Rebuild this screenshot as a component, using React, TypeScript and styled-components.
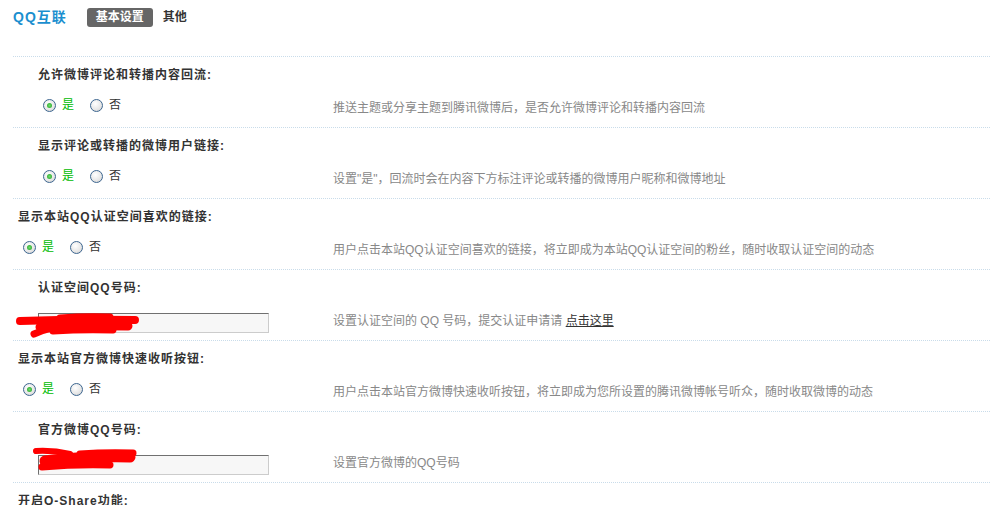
import React from 'react';
import styled, { createGlobalStyle } from 'styled-components';

const GlobalStyle = createGlobalStyle`
  html, body {
    margin: 0;
    padding: 0;
    background: #fff;
  }
  body {
    font-family: "Liberation Sans", "Noto Sans CJK SC", sans-serif;
    font-size: 12px;
    color: #333;
  }
`;

interface Setting {
  title: string;
  indent: boolean;
  kind: 'radio' | 'input';
  desc: string;
  link?: string;
  scribble?: 'a' | 'b';
}

const settings: Setting[] = [
  {
    title: '允许微博评论和转播内容回流:',
    indent: true,
    kind: 'radio',
    desc: '推送主题或分享主题到腾讯微博后，是否允许微博评论和转播内容回流',
  },
  {
    title: '显示评论或转播的微博用户链接:',
    indent: true,
    kind: 'radio',
    desc: '设置"是"，回流时会在内容下方标注评论或转播的微博用户昵称和微博地址',
  },
  {
    title: '显示本站QQ认证空间喜欢的链接:',
    indent: false,
    kind: 'radio',
    desc: '用户点击本站QQ认证空间喜欢的链接，将立即成为本站QQ认证空间的粉丝，随时收取认证空间的动态',
  },
  {
    title: '认证空间QQ号码:',
    indent: true,
    kind: 'input',
    scribble: 'a',
    desc: '设置认证空间的 QQ 号码，提交认证申请请 ',
    link: '点击这里',
  },
  {
    title: '显示本站官方微博快速收听按钮:',
    indent: false,
    kind: 'radio',
    desc: '用户点击本站官方微博快速收听按钮，将立即成为您所设置的腾讯微博帐号听众，随时收取微博的动态',
  },
  {
    title: '官方微博QQ号码:',
    indent: true,
    kind: 'input',
    scribble: 'b',
    desc: '设置官方微博的QQ号码',
  },
];

// red marker strokes over the redacted numbers: [x1, y1, x2, y2, width]
const marks: Record<'a' | 'b', { top: number; strokes: number[][] }> = {
  a: {
    top: 0,
    strokes: [
      [7, 8, 122, 7, 8],
      [27, 14, 115, 13, 9],
      [21, 21, 60, 13, 7],
      [47, 5, 97, 4, 7],
      [40, 18, 100, 17, 7],
    ],
  },
  b: {
    top: -10,
    strokes: [
      [23, 6, 57, 9, 6],
      [32, 16, 117, 12, 11],
      [29, 22, 97, 20, 7],
      [67, 9, 120, 8, 7],
    ],
  },
};

function Scribble({ variant }: { variant: 'a' | 'b' }) {
  const m = marks[variant];
  return (
    <Mark width="140" height="34" viewBox="0 0 140 34" style={{ top: m.top }}>
      {m.strokes.map(([x1, y1, x2, y2, w], i) => (
        <path
          key={i}
          d={`M${x1} ${y1} Q${(x1 + x2) / 2} ${Math.min(y1, y2) - 1} ${x2} ${y2}`}
          stroke="#ff0000"
          strokeWidth={w}
          strokeLinecap="round"
          fill="none"
        />
      ))}
    </Mark>
  );
}

export default function App() {
  return (
    <Page>
      <GlobalStyle />
      <Header>
        <Brand>QQ互联</Brand>
        <Tabs>
          <Tab $active>基本设置</Tab>
          <Tab>其他</Tab>
        </Tabs>
      </Header>

      {settings.map((s, i) => (
        <Row key={i}>
          <Title $indent={s.indent}>{s.title}</Title>
          {s.kind === 'radio' ? (
            <Controls $indent={s.indent}>
              <Option>
                <Radio $checked />
                <Yes>是</Yes>
              </Option>
              <Option>
                <Radio />
                <No>否</No>
              </Option>
            </Controls>
          ) : (
            <InputCell>
              <TextInput defaultValue="" />
              {s.scribble && <Scribble variant={s.scribble} />}
            </InputCell>
          )}
          <Desc>
            {s.desc}
            {s.link && <Link>{s.link}</Link>}
          </Desc>
        </Row>
      ))}

      <Row>
        <Title $indent={false}>开启O-Share功能:</Title>
      </Row>
    </Page>
  );
}

const Page = styled.div`
  width: 977px;
  padding-left: 13px;
  height: 505px;
  overflow: hidden;
`;

const Header = styled.div`
  display: flex;
  align-items: flex-start;
  height: 56px;
  box-sizing: border-box;
  padding-top: 8px;
`;

const Brand = styled.span`
  font-size: 14px;
  font-weight: bold;
  color: #1b8fcf;
  line-height: 19px;
  letter-spacing: 1px;
  margin-right: 20px;
`;

const Tabs = styled.div`
  display: flex;
  gap: 10px;
`;

const Tab = styled.span<{ $active?: boolean }>`
  display: inline-block;
  height: 19px;
  line-height: 19px;
  padding: 0 ${({ $active }) => ($active ? '9px' : '0')};
  border-radius: 3px;
  font-weight: bold;
  font-size: 12px;
  background: ${({ $active }) => ($active ? '#666' : 'transparent')};
  color: ${({ $active }) => ($active ? '#fff' : '#333')};
`;

const Row = styled.div`
  display: grid;
  grid-template-columns: 320px 1fr;
  grid-template-rows: 16px 28px;
  row-gap: 10px;
  padding: 10px 0 6px;
  border-top: 1px dotted #c9dcea;
`;

const Title = styled.div<{ $indent: boolean }>`
  grid-column: 1 / -1;
  padding-left: ${({ $indent }) => ($indent ? '25px' : '5px')};
  font-weight: bold;
  line-height: 16px;
  letter-spacing: 1px;
  color: #333;
`;

const Controls = styled.div<{ $indent: boolean }>`
  display: flex;
  align-items: center;
  gap: 16px;
  padding-left: ${({ $indent }) => ($indent ? '30px' : '10px')};
  align-self: start;
  margin-top: 4px;
  height: 16px;
`;

const Option = styled.label`
  display: flex;
  align-items: center;
  gap: 6px;
`;

const Radio = styled.span<{ $checked?: boolean }>`
  position: relative;
  width: 11px;
  height: 11px;
  border-radius: 50%;
  border: 1px solid #3d6690;
  background: radial-gradient(circle at 40% 35%, #ffffff 0%, #e6e6e6 60%, #c8c8c8 100%);

  &::after {
    content: '';
    display: ${({ $checked }) => ($checked ? 'block' : 'none')};
    position: absolute;
    left: 3px;
    top: 3px;
    width: 5px;
    height: 5px;
    border-radius: 50%;
    background: radial-gradient(circle, #6fdc6f 0%, #1ea01e 100%);
  }
`;

const Yes = styled.span`
  color: #00bb00;
  line-height: 16px;
`;

const No = styled.span`
  color: #333;
  line-height: 16px;
`;

const InputCell = styled.div`
  position: relative;
  padding-left: 25px;
  align-self: end;
  margin-bottom: 1px;
`;

const TextInput = styled.input`
  display: block;
  box-sizing: border-box;
  width: 231px;
  height: 20px;
  margin: 0;
  padding: 0 4px;
  background: #f7f7f7;
  border: 1px solid #ccc;
  border-top-color: #707070;
  border-left-color: #707070;
  font-size: 12px;
  outline: none;
`;

const Mark = styled.svg`
  position: absolute;
  left: 0;
  pointer-events: none;
`;

const Desc = styled.div`
  align-self: end;
  margin-bottom: 5px;
  color: #888;
  line-height: 16px;
  white-space: nowrap;
`;

const Link = styled.a`
  color: #333;
  text-decoration: underline;
  cursor: pointer;
`;
